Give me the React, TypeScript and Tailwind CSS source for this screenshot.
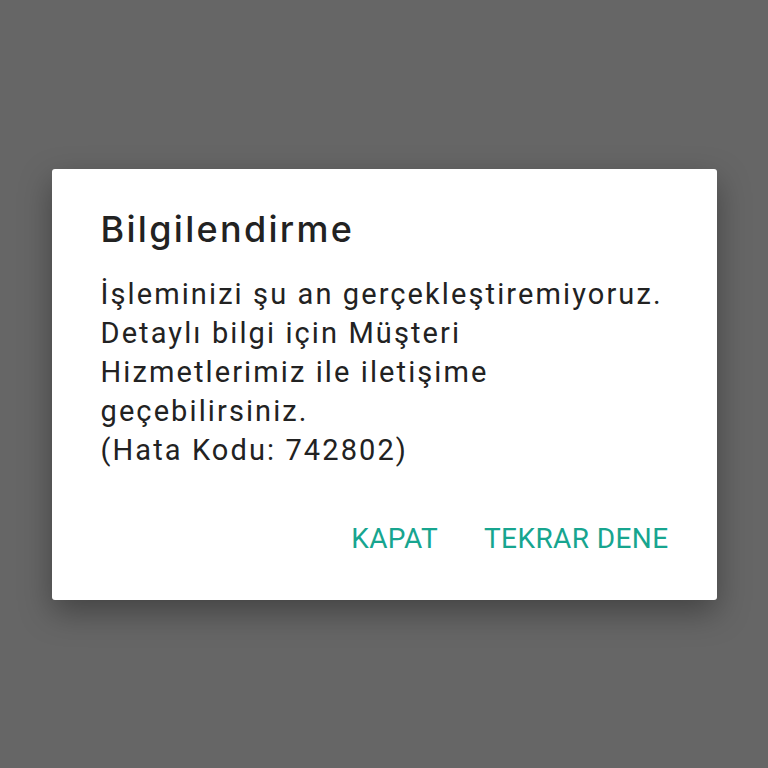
export default function App() {
	return (
		<div className="w-[768px] h-[768px] bg-[#666666] flex items-center justify-center font-['Roboto','Noto_Sans',sans-serif]">
			<div className="w-[665px] h-[431px] bg-white rounded-[3px] shadow-[0_12px_32px_rgba(0,0,0,0.35)] pl-[49px] pr-[40px] pt-[36px] flex flex-col">
				<h1 className="font-['Inter',sans-serif] text-[36px] font-medium tracking-[2.3px] text-[#222222] leading-[48px]">Bilgilendirme</h1>
				<p className="mt-[22px] text-[29px] tracking-[2.1px] leading-[39px] text-[#222222] whitespace-nowrap">
					İşleminizi şu an gerçekleştiremiyoruz.<br />
					Detaylı bilgi için Müşteri<br />
					Hizmetlerimiz ile iletişime<br />
					geçebilirsiniz.<br />
					(Hata Kodu: 742802)
				</p>
				<div className="mt-[48px] flex justify-end gap-[46px] pr-[8px] text-[28px] tracking-[0.4px] text-[#17a58f]">
					<button>KAPAT</button>
					<button>TEKRAR DENE</button>
				</div>
			</div>
		</div>
	);
}
